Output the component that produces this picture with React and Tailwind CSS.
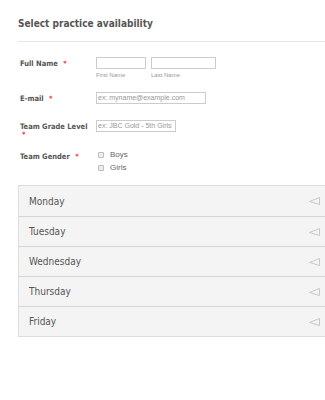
export default function App() {
  const font = { fontFamily: '"DejaVu Sans Condensed", "DejaVu Sans", Verdana, sans-serif' };
  const arial = { fontFamily: '"Liberation Sans", Arial, sans-serif' };
  const days = ["Monday", "Tuesday", "Wednesday", "Thursday", "Friday"];
  return (
    <div className="w-[325px] h-[400px] bg-white overflow-hidden" style={font}>
      <div className="pl-[18px] pt-[16px]">
        <div className="text-[10px] font-bold text-[#555] leading-[15px] whitespace-nowrap">Select practice availability</div>
        <div className="mt-[10px] border-t border-[#e6e6e6]"></div>

        <div className="flex mt-[15px]">
          <div className="w-[78px] pl-[2px] pt-[2px] text-[7.5px] font-bold text-[#555] leading-[10px] whitespace-nowrap">
            Full Name <span className="text-[#f23a3c] ml-[3px]">*</span>
          </div>
          <div className="flex gap-[5px]">
            <div className="flex flex-col">
              <div className="w-[50px] h-[12px] border border-[#ccc]"></div>
              <div className="text-[6px] text-[#999] mt-[2px] leading-[8px]" style={arial}>First Name</div>
            </div>
            <div className="flex flex-col">
              <div className="w-[65px] h-[12px] border border-[#ccc]"></div>
              <div className="text-[6px] text-[#999] mt-[2px] leading-[8px]" style={arial}>Last Name</div>
            </div>
          </div>
        </div>

        <div className="flex mt-[13px]">
          <div className="w-[78px] pl-[2px] pt-[2px] text-[7.5px] font-bold text-[#555] leading-[10px] whitespace-nowrap">
            E-mail <span className="text-[#f23a3c] ml-[3px]">*</span>
          </div>
          <div className="w-[110px] h-[12px] border border-[#ccc] text-[7px] text-[#999] pl-[1px] leading-[10px]" style={arial}>
            ex: myname@example.com
          </div>
        </div>

        <div className="flex mt-[16px]">
          <div className="w-[78px] pl-[2px] pt-[2px] text-[7.5px] font-bold text-[#555] leading-[10px] whitespace-nowrap">
            Team Grade Level
            <div className="text-[#f23a3c] leading-[6px] pl-[2px]">*</div>
          </div>
          <div className="w-[80px] h-[12px] border border-[#ccc] text-[7px] text-[#999] pl-[1px] leading-[10px] whitespace-nowrap" style={arial}>
            ex: JBC Gold - 5th Girls
          </div>
        </div>

        <div className="flex mt-[12px]">
          <div className="w-[78px] pl-[2px] pt-[2px] text-[7.5px] font-bold text-[#555] leading-[10px] whitespace-nowrap">
            Team Gender <span className="text-[#f23a3c] ml-[3px]">*</span>
          </div>
          <div className="flex flex-col gap-[5px] pl-[2px] pt-[1px]">
            {["Boys", "Girls"].map((l) => (
              <div key={l} className="flex items-center gap-[6px] text-[8px] text-[#666] leading-[8px]" style={arial}>
                <div className="w-[6px] h-[6px] border border-[#bbb] bg-[#eee] rounded-[1px]"></div>
                {l}
              </div>
            ))}
          </div>
        </div>

        <div className="mt-[13px] w-[320px] border border-[#ddd] bg-[#f4f4f4]">
          {days.map((d, i) => (
            <div
              key={d}
              className={`h-[30px] flex items-center justify-between pl-[10px] pr-[17px] ${i > 0 ? "border-t border-[#d4d4d4]" : ""}`}
            >
              <span className="text-[10px] text-[#555]">{d}</span>
              <svg width="11" height="8" viewBox="0 0 11 8">
                <path d="M10.5 0.5 L0.5 4.5 L10.5 7.5 Z" fill="#f4f4f4" stroke="#c8c8c8" strokeWidth="1" />
              </svg>
            </div>
          ))}
        </div>
      </div>
    </div>
  );
}
